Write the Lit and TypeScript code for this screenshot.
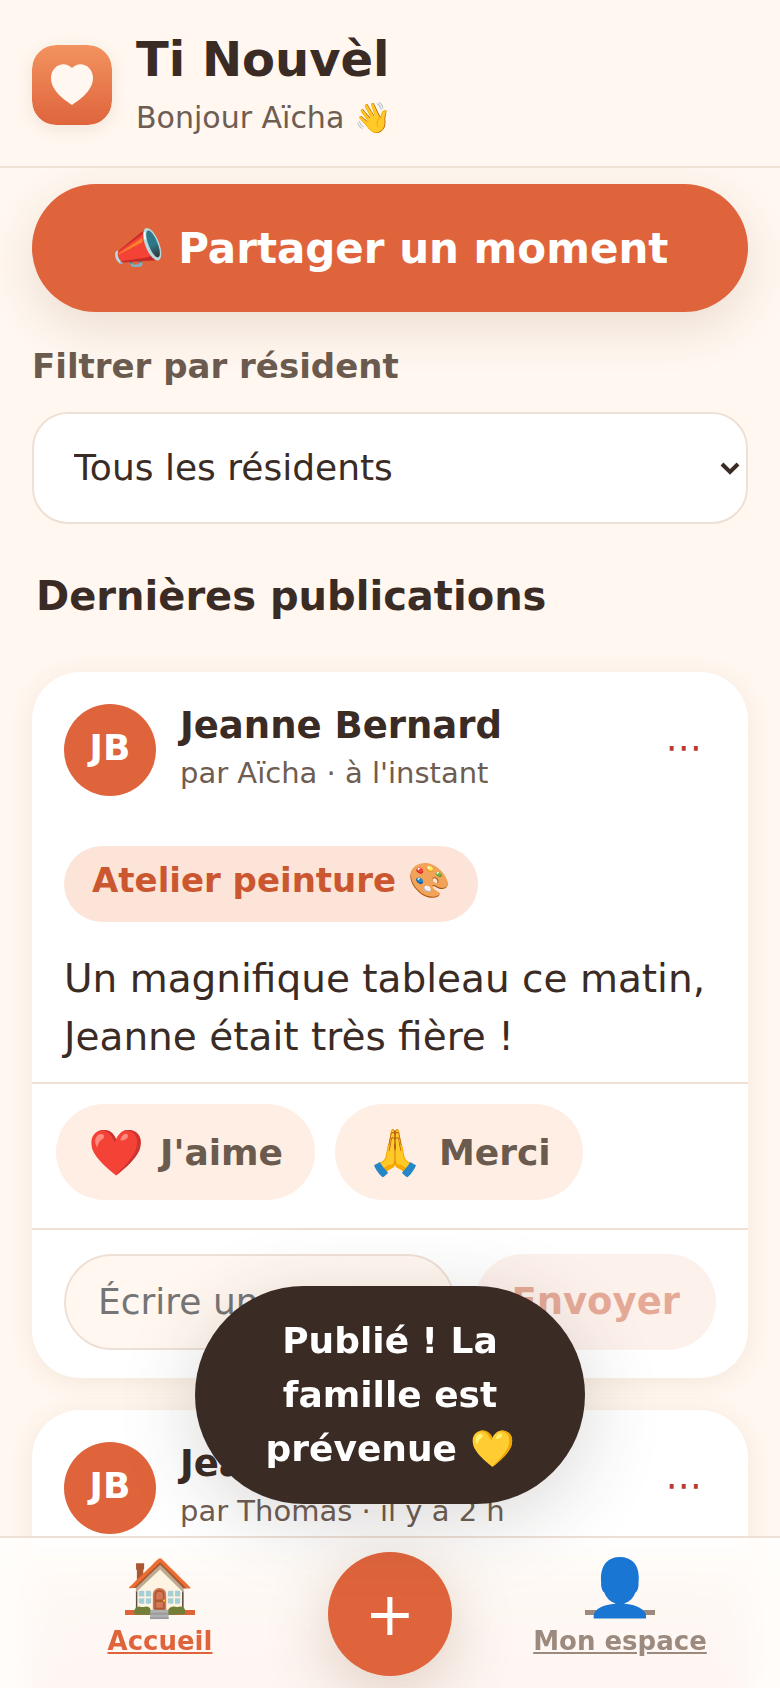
import { LitElement, html, css, nothing } from 'lit';
import { customElement, property, state } from 'lit/decorators.js';

interface Post {
    id: number;
    resident: string;
    initials: string;
    author: string;
    when: string;
    tag?: string;
    text?: string;
    photo?: boolean;
}

const POSTS: Post[] = [
    {
        id: 1,
        resident: 'Jeanne Bernard',
        initials: 'JB',
        author: 'Aïcha',
        when: "à l'instant",
        tag: 'Atelier peinture 🎨',
        text: 'Un magnifique tableau ce matin, Jeanne était très fière !'
    },
    {
        id: 2,
        resident: 'Jeanne Bernard',
        initials: 'JB',
        author: 'Thomas',
        when: 'il y a 2 h',
        photo: true
    }
];

@customElement('post-card')
export class PostCard extends LitElement {
    @property({ attribute: false }) post!: Post;
    @state() private draft = '';

    static styles = css`
        :host {
            display: block;
            background: #fff;
            border-radius: 48px;
            box-shadow: 0 4px 24px rgba(160, 100, 40, 0.1);
            overflow: hidden;
        }
        .head {
            display: flex;
            align-items: center;
            gap: 24px;
            padding: 32px 32px 24px;
        }
        .avatar {
            display: grid;
            place-items: center;
            flex: none;
            width: 92px;
            height: 92px;
            padding-bottom: 6px;
            box-sizing: border-box;
            border-radius: 50%;
            background: #df643c;
            color: #fff;
            font-size: 36px;
            font-weight: 700;
        }
        .who {
            flex: 1;
            min-width: 0;
        }
        .name {
            margin: 0;
            font-size: 37px;
            line-height: 44px;
            font-weight: 700;
        }
        .meta {
            margin: 0;
            padding-top: 2px;
            font-size: 29px;
            line-height: 46px;
            color: #6e5d52;
        }
        button,
        input {
            font: inherit;
            border: none;
            cursor: pointer;
        }
        .more {
            width: 96px;
            height: 88px;
            padding: 0 0 6px;
            margin-right: -16px;
            background: none;
            color: #b93a32;
            font-size: 37px;
        }
        .content {
            padding: 26px 32px 16px;
        }
        .tag {
            display: inline-block;
            padding: 10px 28px 18px;
            border-radius: 38px;
            background: #fce4d9;
            color: #cb5730;
            font-size: 34px;
            line-height: 48px;
            font-weight: 700;
        }
        .text {
            margin: 28px 0 0;
            font-size: 39px;
            line-height: 58px;
        }
        .photo {
            height: 480px;
            background: linear-gradient(#fdecd9, #fbdcd0 25%);
        }
        .reactions {
            display: flex;
            gap: 20px;
            padding: 20px 24px 28px;
            border-top: 2px solid #efe0d6;
        }
        .reaction {
            display: flex;
            align-items: center;
            gap: 16px;
            height: 96px;
            padding: 0 32px;
            border-radius: 48px;
            background: #feeee4;
            color: #6b5a4e;
            font-size: 36px;
            font-weight: 700;
        }
        .emoji {
            font-size: 45px;
            font-weight: 400;
        }
        .comment {
            display: flex;
            gap: 20px;
            padding: 24px 32px 28px;
            border-top: 2px solid #efe0d6;
        }
        .comment input {
            flex: 1;
            min-width: 0;
            height: 96px;
            box-sizing: border-box;
            padding: 0 32px 2px;
            border: 2px solid #efe0d6;
            border-radius: 48px;
            background: #fff7f0;
            color: inherit;
            font-size: 36px;
        }
        .comment input::placeholder {
            color: #757575;
        }
        .send {
            height: 96px;
            padding: 0 36px 2px;
            border-radius: 48px;
            background: #fce4d9;
            color: #cb5730;
            font-size: 37px;
            font-weight: 700;
        }
        .send:disabled {
            opacity: 0.5;
            cursor: default;
        }
    `;

    private handleInput(e: Event) {
        this.draft = (e.target as HTMLInputElement).value;
    }

    render() {
        const { resident, initials, author, when, tag, text, photo } = this.post;
        return html`
            <div class="head">
                <div class="avatar">${initials}</div>
                <div class="who">
                    <h3 class="name">${resident}</h3>
                    <p class="meta">par ${author} · ${when}</p>
                </div>
                <button class="more" aria-label="Options">⋯</button>
            </div>
            ${photo ? html`<div class="photo"></div>` : nothing}
            ${text ? html`
                <div class="content">
                    <span class="tag">${tag}</span>
                    <p class="text">${text}</p>
                </div>
            ` : nothing}
            <div class="reactions">
                <button class="reaction"><span class="emoji">❤️</span>J'aime</button>
                <button class="reaction"><span class="emoji">🙏</span>Merci</button>
            </div>
            <div class="comment">
                <input
                    type="text"
                    aria-label="Commentaire"
                    placeholder="Écrire un mot…"
                    .value=${this.draft}
                    @input=${this.handleInput}
                />
                <button class="send" ?disabled=${!this.draft.trim()}>Envoyer</button>
            </div>
        `;
    }
}

@customElement('app-root')
export class AppRoot extends LitElement {
    @state() private toast = 'Publié ! La famille est prévenue 💛';

    static styles = css`
        :host {
            display: flex;
            flex-direction: column;
            height: 100vh;
            background: #fff7f0;
            color: #3a2b25;
            font-family: 'DejaVu Sans', sans-serif;
        }
        .header {
            display: flex;
            align-items: center;
            gap: 24px;
            padding: 28px 32px 24px;
            border-bottom: 2px solid #efe3d6;
        }
        .logo {
            flex: none;
            width: 80px;
            height: 80px;
            border-radius: 24px;
            box-shadow: 0 4px 16px rgba(160, 100, 40, 0.12);
        }
        .title {
            margin: 0;
            font-size: 48px;
            line-height: 62px;
            font-weight: 700;
        }
        .hello {
            margin: 4px 0 0;
            font-size: 30px;
            line-height: 48px;
            color: #6e5d52;
        }
        .feed {
            flex: 1;
            min-height: 0;
            overflow-y: auto;
            scrollbar-width: none;
            padding: 16px 32px 160px;
        }
        .share {
            display: block;
            width: 100%;
            height: 128px;
            border: none;
            border-radius: 64px;
            background: #df643c;
            color: #fff;
            font: inherit;
            font-size: 42px;
            font-weight: 700;
            box-shadow: 0 16px 48px rgba(120, 70, 30, 0.14);
            cursor: pointer;
        }
        .label {
            display: block;
            margin: 28px 0 20px;
            font-size: 34px;
            line-height: 52px;
            font-weight: 700;
            color: #6b5a4e;
        }
        .picker {
            display: grid;
            align-items: center;
        }
        .filter,
        .chevron {
            grid-area: 1 / 1;
        }
        .filter {
            appearance: none;
            width: 100%;
            height: 112px;
            padding: 0 40px 2px;
            border: 2px solid #efe0d6;
            border-radius: 36px;
            background: #fff;
            color: inherit;
            font: inherit;
            font-size: 36px;
        }
        .chevron {
            justify-self: end;
            width: 20px;
            height: 14px;
            margin-right: 8px;
            fill: none;
            stroke: #3a2b25;
            stroke-width: 4;
            pointer-events: none;
        }
        .section {
            margin: 40px 4px 44px;
            font-size: 40px;
            line-height: 64px;
            font-weight: 700;
        }
        .posts {
            display: flex;
            flex-direction: column;
            gap: 32px;
        }
        .toast {
            position: fixed;
            left: 50%;
            bottom: 184px;
            transform: translateX(-50%);
            width: 50%;
            box-sizing: border-box;
            padding: 28px 56px;
            border-radius: 110px;
            background: #3a2b25;
            color: #fff;
            font-size: 36px;
            line-height: 54px;
            font-weight: 700;
            text-align: center;
            box-shadow: 0 16px 80px rgba(58, 43, 37, 0.18);
        }
        .nav {
            position: fixed;
            inset: auto 0 0;
            display: grid;
            grid-template-columns: 1fr 124px 1fr;
            gap: 8px;
            align-items: start;
            padding: 14px 0 12px;
            border-top: 2px solid #efe0d6;
            background: rgba(255, 255, 255, 0.72);
            backdrop-filter: blur(20px);
        }
        .tab {
            display: flex;
            flex-direction: column;
            align-items: center;
            color: #9c8a7e;
            font-size: 26px;
            line-height: 34px;
            font-weight: 700;
            text-decoration: underline;
        }
        .tab.active {
            color: #df643c;
        }
        .icon {
            font-size: 56px;
            line-height: 72px;
        }
        .add {
            width: 124px;
            height: 124px;
            padding: 0;
            border: none;
            border-radius: 50%;
            background: #df643c;
            color: #fff;
            font: inherit;
            font-size: 60px;
            box-shadow: 0 16px 64px rgba(120, 70, 30, 0.24);
            cursor: pointer;
        }
    `;

    render() {
        return html`
            <header class="header">
                <svg class="logo" viewBox="0 0 80 80" aria-hidden="true">
                    <defs>
                        <linearGradient id="warm" x1="0" y1="0" x2="0" y2="1">
                            <stop offset="0" stop-color="#f2935f" />
                            <stop offset="1" stop-color="#df643c" />
                        </linearGradient>
                    </defs>
                    <rect width="80" height="80" rx="24" fill="url(#warm)" />
                    <path
                        d="M40 60C31 54 19 45 19 33C19 20 33 15 40 23C47 15 61 20 61 33C61 45 49 54 40 60Z"
                        fill="#fff7f0"
                    />
                </svg>
                <div>
                    <h1 class="title">Ti Nouvèl</h1>
                    <p class="hello">Bonjour Aïcha 👋</p>
                </div>
            </header>
            <main class="feed">
                <button class="share">📣 Partager un moment</button>
                <label class="label" for="resident">Filtrer par résident</label>
                <div class="picker">
                    <select class="filter" id="resident">
                        <option>Tous les résidents</option>
                        <option>Jeanne Bernard</option>
                    </select>
                    <svg class="chevron" viewBox="0 0 20 14" aria-hidden="true">
                        <path d="M2 3L10 11L18 3" />
                    </svg>
                </div>
                <h2 class="section">Dernières publications</h2>
                <div class="posts">
                    ${POSTS.map((post) => html`<post-card .post=${post}></post-card>`)}
                </div>
            </main>
            <nav class="nav">
                <a class="tab active" href="#accueil"><span class="icon">🏠</span><span>Accueil</span></a>
                <button class="add" aria-label="Partager un moment">+</button>
                <a class="tab" href="#espace"><span class="icon">👤</span><span>Mon espace</span></a>
            </nav>
            <div class="toast" role="status">${this.toast}</div>
        `;
    }
}
